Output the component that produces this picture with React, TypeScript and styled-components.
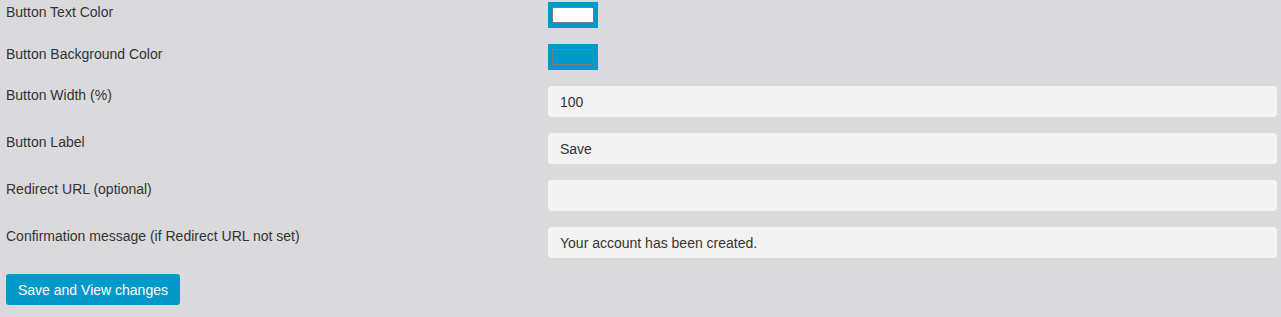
import React from 'react';
import styled, { createGlobalStyle } from 'styled-components';

const GlobalStyle = createGlobalStyle`
  html, body {
    margin: 0;
    padding: 0;
    background: #dadadc;
  }
  body {
    font-family: "Liberation Sans", Arial, sans-serif;
    font-size: 14px;
    color: #333;
  }
`;

const Form = styled.div`
  display: grid;
  grid-template-columns: 542px 1fr;
  row-gap: 16px;
  padding: 2px 4px 12px 6px;
`;

const Label = styled.div<{ $offset?: number }>`
  line-height: 20px;
  margin-top: ${(p) => p.$offset ?? 0}px;
  color: #333;
`;

const Swatch = styled.div`
  width: 50px;
  height: 26px;
  box-sizing: border-box;
  padding: 5px 4px;
  background: #0099c9;
`;

const SwatchInner = styled.div<{ $color: string }>`
  height: 100%;
  box-sizing: border-box;
  border: 1px solid #7a7a7a;
  background: ${(p) => p.$color};
`;

const TextInput = styled.div`
  height: 31px;
  box-sizing: border-box;
  padding: 0 12px;
  display: flex;
  align-items: center;
  background: #f3f3f3;
  border-radius: 4px;
  color: #333;
`;

const Button = styled.button`
  grid-column: 1 / span 2;
  justify-self: start;
  height: 31px;
  padding: 0 12px;
  border: none;
  border-radius: 3px;
  background: #0099c9;
  color: #fff;
  font-family: "Liberation Sans", Arial, sans-serif;
  font-size: 14px;
`;

const rows = [
  { label: 'Button Width (%)', value: '100' },
  { label: 'Button Label', value: 'Save' },
  { label: 'Redirect URL (optional)', value: '' },
  { label: 'Confirmation message (if Redirect URL not set)', value: 'Your account has been created.' },
];

export default function App() {
  return (
    <>
      <GlobalStyle />
      <Form>
        <Label>Button Text Color</Label>
        <Swatch>
          <SwatchInner $color="#ffffff" />
        </Swatch>
        <Label>Button Background Color</Label>
        <Swatch>
          <SwatchInner $color="#0099c9" />
        </Swatch>
        {rows.map((r) => (
          <React.Fragment key={r.label}>
            <Label $offset={-1}>{r.label}</Label>
            <TextInput>{r.value}</TextInput>
          </React.Fragment>
        ))}
        <Button>Save and View changes</Button>
      </Form>
    </>
  );
}
